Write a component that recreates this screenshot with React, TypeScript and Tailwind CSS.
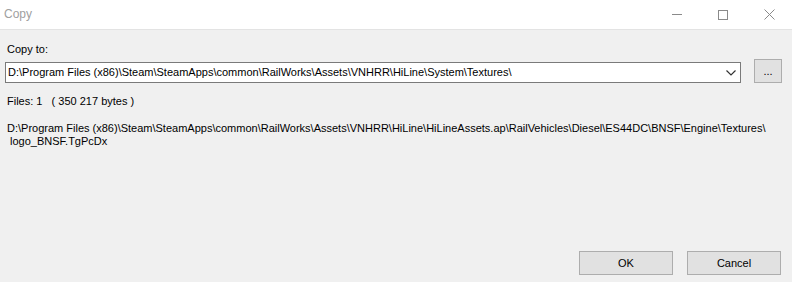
import { ChevronDown } from 'lucide-react';

const font = { fontFamily: '"Liberation Sans", Arial, sans-serif' };

function WinButton({ label, className = '' }: { label: string; className?: string }) {
  return (
    <button className={`flex items-center justify-center border border-[#adadad] bg-[#e1e1e1] text-[11px] text-black ${className}`}>
      {label}
    </button>
  );
}

export default function App() {
  return (
    <div className="flex h-[282px] w-[792px] flex-col bg-[#f0f0f0] text-[11px] leading-[13px] text-black" style={font}>
      {/* Title bar */}
      <div className="flex h-[30px] items-center justify-between border-b border-[#e3e3e3] bg-white">
        <span className="pl-[4px] text-[12px] text-[#a0a0a0]">Copy</span>
        <div className="flex items-center">
          <div className="flex h-[29px] w-[46px] items-center justify-center">
            <div className="h-px w-[10px] bg-[#8a8a8a]" />
          </div>
          <div className="flex h-[29px] w-[46px] items-center justify-center">
            <div className="h-[10px] w-[10px] border border-[#8a8a8a]" />
          </div>
          <div className="flex h-[29px] w-[46px] items-center justify-center">
            <svg width="11" height="11" viewBox="0 0 11 11" stroke="#8a8a8a" strokeWidth="1">
              <path d="M0.5 0.5 L10.5 10.5 M10.5 0.5 L0.5 10.5" />
            </svg>
          </div>
        </div>
      </div>

      <div className="flex flex-1 flex-col px-[7px] pb-[7px]">
        <div className="pt-[13px]">Copy to:</div>

        <div className="mt-[3px] flex items-end">
          <div className="ml-[-2px] flex h-[21px] w-[736px] items-center border border-[#7a7a7a] bg-white pl-[2px]">
            <span className="flex-1 whitespace-nowrap">
              D:\Program Files (x86)\Steam\SteamApps\common\RailWorks\Assets\VNHRR\HiLine\System\Textures\
            </span>
            <svg className="mr-[4px]" width="10" height="6" viewBox="0 0 10 6" fill="none" stroke="#333" strokeWidth="1.2">
              <path d="M0.5 0.5 L5 5 L9.5 0.5" />
            </svg>
          </div>
          <WinButton label="..." className="ml-[13px] h-[24px] w-[28px]" />
        </div>

        <div className="mt-[12px] whitespace-pre">Files: 1   ( 350 217 bytes )</div>

        <div className="mt-[14px] whitespace-pre">
          D:\Program Files (x86)\Steam\SteamApps\common\RailWorks\Assets\VNHRR\HiLine\HiLineAssets.ap\RailVehicles\Diesel\ES44DC\BNSF\Engine\Textures\
          {'\n'} logo_BNSF.TgPcDx
        </div>

        <div className="mt-auto flex justify-end gap-[14px] pr-[4px]">
          <WinButton label="OK" className="h-[24px] w-[94px]" />
          <WinButton label="Cancel" className="h-[24px] w-[94px]" />
        </div>
      </div>
    </div>
  );
}
